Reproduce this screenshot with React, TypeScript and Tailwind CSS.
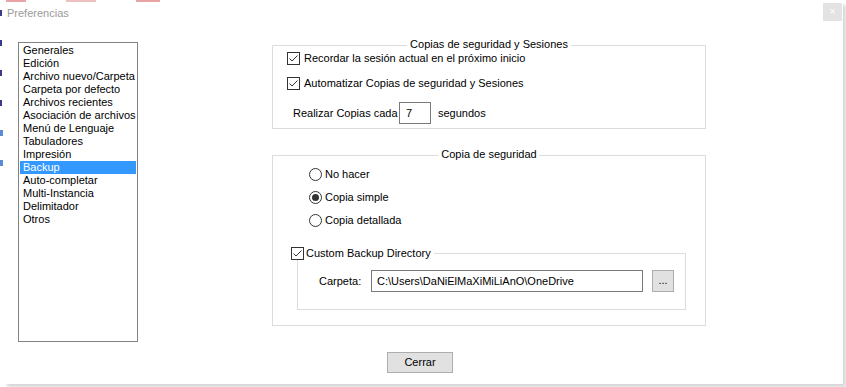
import React, { useState } from 'react';

const items = [
  'Generales',
  'Edición',
  'Archivo nuevo/Carpeta',
  'Carpeta por defecto',
  'Archivos recientes',
  'Asociación de archivos',
  'Menú de Lenguaje',
  'Tabuladores',
  'Impresión',
  'Backup',
  'Auto-completar',
  'Multi-Instancia',
  'Delimitador',
  'Otros',
];

function CheckBox({ checked }: { checked: boolean }) {
  return (
    <span className="w-[13px] h-[13px] border border-[#333333] bg-white flex items-center justify-center shrink-0">
      {checked && (
        <svg width="11" height="11" viewBox="0 0 11 11">
          <path d="M1.5 5.5 L4 8 L9.5 2.5" fill="none" stroke="#333333" strokeWidth="1" />
        </svg>
      )}
    </span>
  );
}

function Radio({ checked }: { checked: boolean }) {
  return (
    <span className="w-[13px] h-[13px] rounded-full border border-[#333333] bg-white flex items-center justify-center shrink-0">
      {checked && <span className="w-[7px] h-[7px] rounded-full bg-[#333333]" />}
    </span>
  );
}

export default function App() {
  const [selected, setSelected] = useState('Backup');
  const [mode, setMode] = useState('simple');

  return (
    <div className="w-[846px] h-[387px] bg-white overflow-hidden flex flex-col font-['Liberation_Sans',Arial,sans-serif] text-[11px] leading-[13px] text-black">
      {/* bits of the editor behind the dialog */}
      <div className="h-[2px] flex gap-[40px] pl-[6px] shrink-0">
        <span className="w-[20px] h-[2px] bg-[#e9a5a5]" />
        <span className="w-[30px] h-[2px] bg-[#efc0c0]" />
        <span className="w-[24px] h-[2px] bg-[#e9a5a5]" />
      </div>
      <div className="flex flex-1">
        <div className="w-[4px] flex flex-col gap-[24px] pt-[8px] shrink-0">
          <span className="w-[2px] h-[6px] bg-[#3a3a8a]" />
          <span className="w-[2px] h-[6px] bg-[#3a3a8a]" />
          <span className="w-[2px] h-[6px] bg-[#3a3a8a]" />
          <span className="w-[2px] h-[6px] bg-[#3a3a8a]" />
          <span className="w-[3px] h-[6px] bg-[#5b8bd0]" />
          <span className="w-[3px] h-[6px] bg-[#5b8bd0]" />
        </div>

        <div className="w-[839px] h-[382px] bg-white flex flex-col shadow-[3px_3px_3px_rgba(0,0,0,0.16)]">
          {/* title bar */}
          <div className="h-[22px] flex items-start justify-between shrink-0">
            <span className="pl-[3px] pt-[4px] text-[#9a9a9a] text-[11px] leading-[14px]">Preferencias</span>
            <button className="w-[19px] h-[18px] mt-[1px] mr-[1px] bg-[#e3e3e3] text-white text-[10px] leading-[18px]">×</button>
          </div>

          <div className="flex pl-[14px] pt-[18px]">
            {/* list */}
            <div className="w-[120px] h-[300px] border border-[#828282] bg-white pt-[1px] px-[1px] shrink-0">
              {items.map((it) => (
                <div
                  key={it}
                  onClick={() => setSelected(it)}
                  className={
                    selected === it
                      ? 'h-[13px] pl-[3px] bg-[#3399ff] text-white whitespace-nowrap'
                      : 'h-[13px] pl-[3px] whitespace-nowrap'
                  }
                >
                  {it}
                </div>
              ))}
            </div>

            {/* options */}
            <div className="ml-[134px] pt-[3px] w-[434px] flex flex-col">
              <div className="relative h-[84px] border border-[#dcdcdc] pt-[6px] pl-[14px]">
                <span className="absolute top-[-8px] left-1/2 -translate-x-1/2 bg-white px-[3px] whitespace-nowrap">
                  Copias de seguridad y Sesiones
                </span>
                <label className="flex items-center gap-[4px] h-[13px]">
                  <CheckBox checked />
                  <span>Recordar la sesión actual en el próximo inicio</span>
                </label>
                <label className="flex items-center gap-[4px] h-[13px] mt-[12px]">
                  <CheckBox checked />
                  <span>Automatizar Copias de seguridad y Sesiones</span>
                </label>
                <div className="flex items-center mt-[12px] ml-[6px]">
                  <span className="w-[106px] whitespace-nowrap">Realizar Copias cada</span>
                  <span className="w-[32px] h-[22px] border border-[#7a7a7a] pl-[6px] flex items-center">7</span>
                  <span className="ml-[7px]">segundos</span>
                </div>
              </div>

              <div className="relative h-[171px] mt-[26px] border border-[#dcdcdc] pt-[12px] pl-[36px]">
                <span className="absolute top-[-8px] left-1/2 -translate-x-1/2 bg-white px-[3px] whitespace-nowrap">
                  Copia de seguridad
                </span>
                <label className="flex items-center gap-[3px] h-[13px]" onClick={() => setMode('none')}>
                  <Radio checked={mode === 'none'} />
                  <span>No hacer</span>
                </label>
                <label className="flex items-center gap-[3px] h-[13px] mt-[10px]" onClick={() => setMode('simple')}>
                  <Radio checked={mode === 'simple'} />
                  <span>Copia simple</span>
                </label>
                <label className="flex items-center gap-[3px] h-[13px] mt-[10px]" onClick={() => setMode('detail')}>
                  <Radio checked={mode === 'detail'} />
                  <span>Copia detallada</span>
                </label>

                <div className="relative -ml-[12px] mt-[26px] w-[389px] h-[57px] border border-[#dcdcdc] pt-[16px] pl-[21px] flex items-start">
                  <label className="absolute top-[-7px] left-[-7px] flex items-center gap-[2px] bg-white pr-[3px]">
                    <CheckBox checked />
                    <span>Custom Backup Directory</span>
                  </label>
                  <span className="w-[52px] h-[22px] flex items-center">Carpeta:</span>
                  <span className="w-[272px] h-[22px] border border-[#7a7a7a] pl-[5px] flex items-center whitespace-nowrap">
                    C:\Users\DaNiElMaXiMiLiAnO\OneDrive
                  </span>
                  <button className="ml-[9px] w-[22px] h-[22px] border border-[#adadad] bg-[#e1e1e1] text-[11px] leading-[13px] pb-[2px]">
                    ...
                  </button>
                </div>
              </div>
            </div>
          </div>

          <div className="pl-[383px] pt-[10px]">
            <button className="w-[66px] h-[21px] border border-[#adadad] bg-[#e1e1e1] text-[11px] leading-[13px]">
              Cerrar
            </button>
          </div>
        </div>
      </div>
    </div>
  );
}
